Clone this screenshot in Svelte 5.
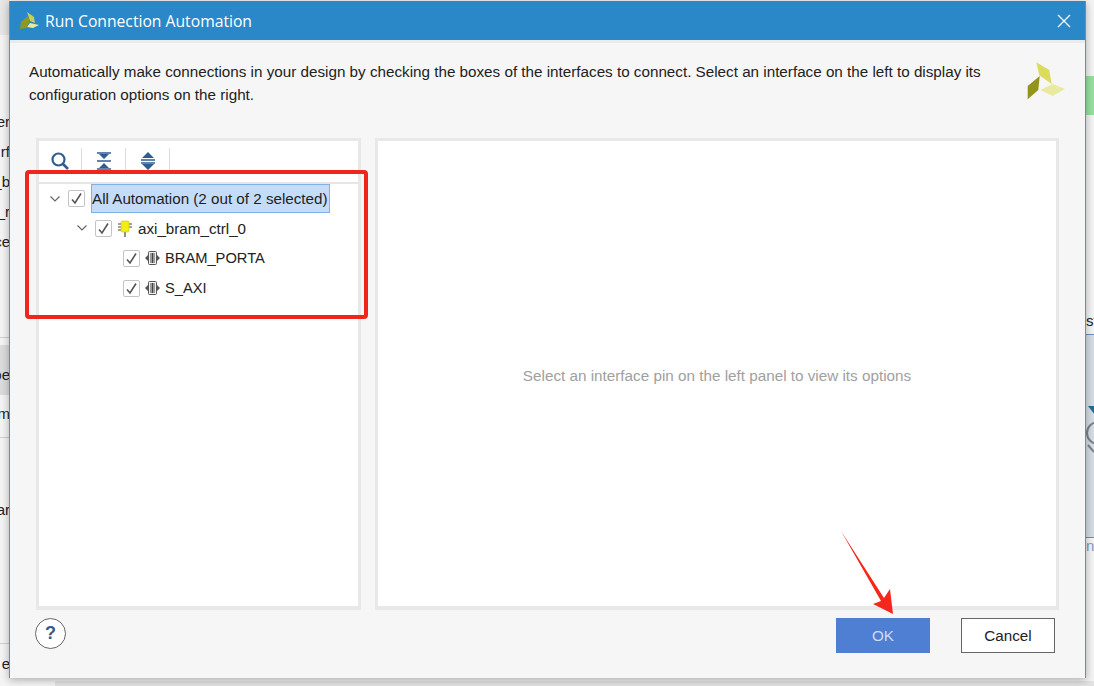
<script>
  const sliversLeft = [
    { t: 'er', y: 114 }, { t: 'rf', y: 144 }, { t: '_b', y: 174 }, { t: '_r', y: 204 },
    { t: 'ce', y: 234 }, { t: 'pe', y: 367 }, { t: 'm', y: 406 }, { t: 'ar', y: 502 }, { t: 'e', y: 656 }
  ];
  const rows = [
    { label: 'All Automation (2 out of 2 selected)', level: 0, chevron: true, icon: null, selected: true },
    { label: 'axi_bram_ctrl_0', level: 1, chevron: true, icon: 'ip' },
    { label: 'BRAM_PORTA', level: 2, chevron: false, icon: 'intf' },
    { label: 'S_AXI', level: 2, chevron: false, icon: 'intf' }
  ];
</script>

<div class="desktop">
  <div class="bg-top"></div>
  <div class="bg-left-row"></div>
  <div class="bg-left-line one"></div>
  <div class="bg-left-line two"></div>
  <div class="bg-left-line three"></div>
  <div class="bg-bottom"></div>
  {#each sliversLeft as s}
    <span class="sliver" style="top:{s.y}px">{s.t}</span>
  {/each}
  <div class="bg-green"></div>
  <div class="bg-right"></div>
  <span class="sliver-r st">st</span>
  <span class="sliver-r ne">n</span>
  <svg class="bg-q" width="12" height="50" viewBox="0 0 12 50">
    <path d="M3 1h12l-5 9z" fill="#1f6f8f"/>
    <circle cx="13" cy="28" r="11" fill="none" stroke="#7d8488" stroke-width="2"/>
    <path d="M3 40l6 7" stroke="#7d8488" stroke-width="2"/>
  </svg>

  <div class="dialog">
    <header class="title">
      <svg class="logo-small" width="20" height="20" viewBox="0 0 20 20">
        <path d="M7 1l7 5 1 6-5-2z" fill="#c6cf5a"/>
        <path d="M8 5l2 5-4 7-6 1 1-7z" fill="#8f9a1c"/>
        <path d="M10 12l9 2-6 3-6-1z" fill="#e6eaa0"/>
      </svg>
      <span class="title-text">Run Connection Automation</span>
      <svg class="close" width="14" height="14" viewBox="0 0 14 14">
        <path d="M1 1l12 12M13 1L1 13" stroke="#fff" stroke-width="1.2"/>
      </svg>
    </header>
    <div class="band"></div>

    <div class="intro">
      <p>Automatically make connections in your design by checking the boxes of the interfaces to connect. Select an interface on the left to display its configuration options on the right.</p>
      <svg class="logo" width="42" height="42" viewBox="0 0 42 42">
        <path d="M11.300 2.300L24.300 10 26.700 24 14.300 15.300z" fill="#dcdc5c"/>
        <path d="M14.700 16L13.300 30 2.700 39.300V26z" fill="#94941a"/>
        <path d="M27.700 24L40 29 27.700 36 15.300 30z" fill="#e8eaa0"/>
      </svg>
    </div>

    <div class="panels">
      <section class="panel left">
        <div class="toolbar">
          <button class="tool" aria-label="Search">
            <svg width="20" height="20" viewBox="0 0 20 20">
              <circle cx="8.500" cy="8.500" r="6" fill="none" stroke="#2f5d92" stroke-width="2.200"/>
              <path d="M13 13l5 5" stroke="#2f5d92" stroke-width="2.600"/>
            </svg>
          </button>
          <button class="tool" aria-label="Collapse all">
            <svg width="20" height="20" viewBox="0 0 20 20">
              <path d="M3 2h14M3 10h14M3 18h14" stroke="#2f5d92" stroke-width="1.600" />
              <path d="M5 3h10l-5 5zM5 17h10l-5-5z" fill="#2f5d92"/>
            </svg>
          </button>
          <button class="tool" aria-label="Expand all">
            <svg width="20" height="20" viewBox="0 0 20 20">
              <path d="M10 1l6 6H4zM10 19l-6-6h12z" fill="#2f5d92"/>
              <path d="M3 9h14M3 12h14" stroke="#2f5d92" stroke-width="1.400"/>
            </svg>
          </button>
        </div>
        <ul class="tree">
          {#each rows as r}
            <li class="row level-{r.level}">
              <span class="chev">
                {#if r.chevron}
                  <svg width="10" height="6" viewBox="0 0 10 6"><path d="M.5.5L5 5 9.500.5" fill="none" stroke="#666" stroke-width="1.200"/></svg>
                {/if}
              </span>
              <span class="check">
                <svg width="13" height="13" viewBox="0 0 13 13"><path d="M2 7.500l3 3.500L11 1.500" fill="none" stroke="#555" stroke-width="1.600"/></svg>
              </span>
              {#if r.icon === 'ip'}
                <svg class="ico" width="16" height="18" viewBox="0 0 16 18">
                  <path d="M1 5h3M1 8h3M1 11h3M12 5h3M12 8h3M8 13v5" stroke="#444" stroke-width="1.200"/>
                  <rect x="4" y="2" width="8" height="11" rx="1" fill="#f4ee10" stroke="#c9c020" stroke-width=".6"/>
                </svg>
              {:else if r.icon === 'intf'}
                <svg class="ico" width="15" height="14" viewBox="0 0 15 14">
                  <rect x="3.500" y=".5" width="8" height="13" rx="1" fill="#f2f2f2" stroke="#555"/>
                  <path d="M6 2v10M7.500 2v10M9 2v10" stroke="#444"/>
                  <path d="M0 7l3-3v6zM15 7l-3-3v6z" fill="#555"/>
                </svg>
              {/if}
              <span class="label" class:selected={r.selected}>{r.label}</span>
            </li>
          {/each}
        </ul>
      </section>
      <section class="panel right">
        <span class="hint">Select an interface pin on the left panel to view its options</span>
      </section>
    </div>

    <footer class="foot">
      <button class="help" aria-label="Help">?</button>
      <div class="actions">
        <button class="btn ok">OK</button>
        <button class="btn cancel">Cancel</button>
      </div>
    </footer>
  </div>

  <div class="redbox"></div>
  <svg class="arrow" width="64" height="90" viewBox="0 0 64 90">
    <path d="M1 1L44 68 50 59 53 84 33 74 41 71z" fill="#f5261b"/>
  </svg>
</div>

<style>
  :global(body) { margin: 0; background: #f2f2f2; }
  .desktop {
    position: relative;
    width: 1094px;
    height: 686px;
    overflow: hidden;
    font-family: "Liberation Sans", Arial, sans-serif;
    background: #f4f4f4;
  }
  .bg-top { position: absolute; left: 0; top: 0; width: 10px; height: 35px; background: #e6e6e6; }
  .bg-left-row { position: absolute; left: 0; top: 345px; width: 10px; height: 50px; background: #dcdcdc; }
  .bg-left-line { position: absolute; left: 0; width: 10px; height: 1px; background: #cfcfcf; }
  .bg-left-line.one { top: 337px; }
  .bg-left-line.two { top: 437px; }
  .bg-left-line.three { top: 643px; }
  .bg-bottom { position: absolute; left: 55px; top: 681px; width: 1039px; height: 5px; background: #e2e2e2; }
  .sliver { position: absolute; right: calc(100% - 10px); font-size: 15px; line-height: 16px; color: #222; white-space: nowrap; }
  .bg-green { position: absolute; left: 1086px; top: 76px; width: 8px; height: 39px; background: #97e0a0; }
  .bg-right { position: absolute; left: 1086px; top: 334px; width: 8px; height: 202px; background: #d5dde4; border-top: 1px solid #6f8fb4; border-bottom: 1px solid #6f8fb4; }
  .sliver-r { position: absolute; left: 1086px; font-size: 15px; line-height: 16px; color: #222; }
  .sliver-r.st { top: 313px; }
  .sliver-r.ne { top: 538px; color: #7f9cbc; }
  .bg-q { position: absolute; left: 1085px; top: 405px; }

  .dialog {
    position: absolute;
    left: 9px;
    top: 1px;
    width: 1075px;
    height: 677px;
    display: flex;
    flex-direction: column;
    background: #f6f6f6;
    border-left: 1px solid #5a93bb;
    border-right: 1px solid #5a93bb;
    box-shadow: 0 2px 8px rgba(0, 0, 0, .3);
  }
  .title {
    height: 39px;
    flex: none;
    display: flex;
    align-items: center;
    padding: 0 14px 0 10px;
    background: #2a87c8;
    color: #fff;
    font-family: "Open Sans", sans-serif;
    font-size: 15.700px;
  }
  .logo-small { margin-right: 5px; }
  .title-text { flex: 1; }
  .band { height: 3px; flex: none; background: #ebebeb; }
  .intro {
    height: 95px;
    flex: none;
    display: flex;
    padding: 0 18px 0 19px;
    gap: 24px;
  }
  .intro p {
    margin: 17px 0 0;
    flex: 1;
    font-size: 15.230px;
    line-height: 23px;
    color: #222;
  }
  .logo { margin-top: 17px; flex: none; }
  .panels {
    height: 472px;
    flex: none;
    display: flex;
    gap: 14px;
    padding: 0 26px;
  }
  .panel {
    box-sizing: border-box;
    background: #fff;
    border: 3px solid #e8e8e8;
    border-bottom-width: 4px;
  }
  .panel.left { width: 325px; }
  .panel.right { width: 684px; display: flex; align-items: center; justify-content: center; padding-top: 4px; }
  .hint { font-size: 15.250px; color: #a0a0a0; }
  .toolbar {
    height: 43px;
    box-sizing: border-box;
    display: flex;
    align-items: center;
    border-bottom: 2px solid #e6e6e6;
    padding-bottom: 2px;
  }
  .tool {
    width: 44px;
    height: 25px;
    padding: 0;
    border: 0;
    border-right: 1px solid #dcdcdc;
    background: none;
    display: flex;
    align-items: center;
    justify-content: center;
  }
  .tool:first-child { width: 43px; }
  .tree { list-style: none; margin: 0; padding: 0; }
  .row { height: 30px; display: flex; align-items: center; font-size: 15.200px; color: #222; }
  .row.level-0 { height: 29px; padding-left: 11px; }
  .row.level-1 { padding-left: 38px; }
  .row.level-2 { padding-left: 66px; font-size: 14.700px; }
  .chev { width: 10px; height: 6px; display: flex; margin-right: 8px; }
  .check {
    box-sizing: border-box;
    width: 17px;
    height: 17px;
    margin-right: 5px;
    border: 1.500px solid #c4c4c4;
    border-radius: 2px;
    background: #fff;
    display: flex;
    align-items: center;
    justify-content: center;
  }
  .ico { margin-right: 5px; flex: none; }
  .label { white-space: nowrap; }
  .label.selected {
    box-sizing: border-box;
    height: 29px;
    line-height: 27px;
    padding: 0 1px 0 0;
    margin-left: 1px;
    background: #c5dcf9;
    border: 1px solid #7fb0e6;
  }
  .foot {
    flex: 1;
    display: flex;
    align-items: center;
    justify-content: space-between;
    padding: 0 30px 18px 25px;
  }
  .help {
    box-sizing: border-box;
    width: 31px;
    height: 31px;
    margin-bottom: 3px;
    padding: 0;
    border-radius: 50%;
    border: 1px solid #666;
    background: #fff;
    color: #345a92;
    font-family: "Liberation Sans", sans-serif;
    font-weight: 700;
    font-size: 18px;
  }
  .actions { display: flex; gap: 31px; }
  .btn {
    box-sizing: border-box;
    width: 94px;
    height: 35px;
    padding: 0;
    font-family: "Liberation Sans", sans-serif;
    font-size: 15.200px;
  }
  .btn.ok { background: #4f7fd2; border: 0; color: #cfdcf2; }
  .btn.cancel { background: #fff; border: 1px solid #666; color: #222; }

  .redbox {
    position: absolute;
    left: 25px;
    top: 170px;
    width: 335px;
    height: 141px;
    border: 4px solid #f0261c;
    border-radius: 4px;
  }
  .arrow { position: absolute; left: 840px; top: 530px; }
</style>
